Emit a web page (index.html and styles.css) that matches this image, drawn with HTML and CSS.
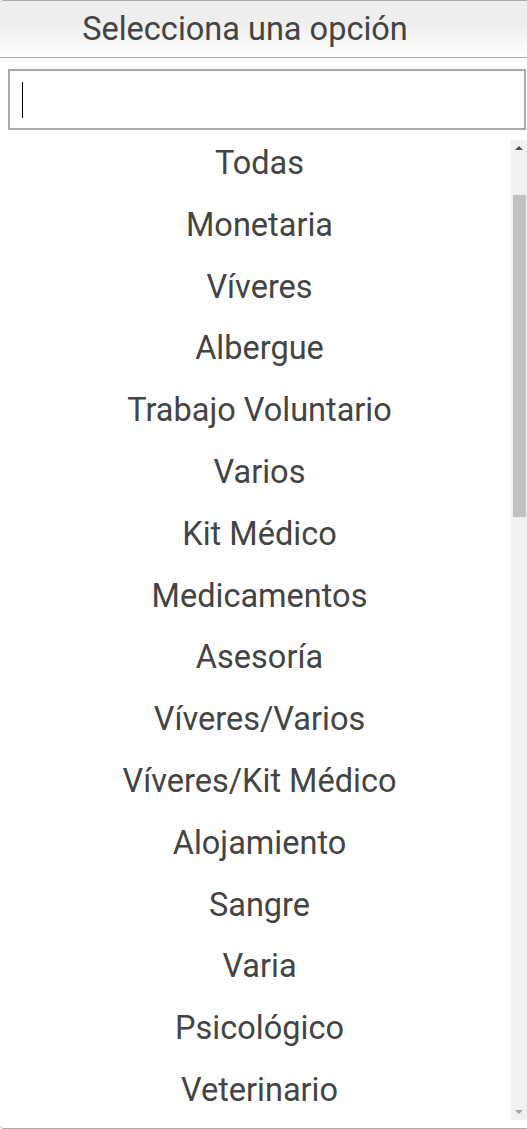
FILE: index.html
```html
<!DOCTYPE html>
<html lang="es">
<head>
  <meta charset="UTF-8">
  <title>Selecciona una opción</title>
  <link rel="stylesheet" href="styles.css">
</head>
<body>
  <div class="drop">
    <div class="choice">Selecciona una opción</div>
    <div class="search">
      <div class="field"><span class="caret"></span></div>
    </div>
    <div class="results">
      <div class="list">
        <ul class="options">
          <li>Todas</li>
          <li>Monetaria</li>
          <li>Víveres</li>
          <li>Albergue</li>
          <li>Trabajo Voluntario</li>
          <li>Varios</li>
          <li>Kit Médico</li>
          <li>Medicamentos</li>
          <li>Asesoría</li>
          <li>Víveres/Varios</li>
          <li>Víveres/Kit Médico</li>
          <li>Alojamiento</li>
          <li>Sangre</li>
          <li>Varia</li>
          <li>Psicológico</li>
          <li>Veterinario</li>
        </ul>
      </div>
      <div class="scrollbar">
        <div class="arrow up"></div>
        <div class="track">
          <div class="thumb"></div>
        </div>
        <div class="arrow down"></div>
      </div>
    </div>
  </div>
</body>
</html>
```

FILE: styles.css
```css
html, body {
  height: 100%;
  overflow: hidden;
}
body {
  margin: 0;
  font-family: Roboto, "Liberation Sans", sans-serif;
  color: #444;
  background: #fff;
}
.drop {
  height: 1129px;
  box-sizing: border-box;
  display: flex;
  flex-direction: column;
  border-top: 1px solid #aaa;
  border-bottom: 1px solid #aaa;
  border-radius: 4px 0 0 4px;
}
.choice {
  height: 56px;
  line-height: 56px;
  padding-right: 37px;
  text-align: center;
  font-size: 32.5px;
  border-bottom: 1px solid #aaa;
  background: linear-gradient(to top, #fff 0%, #eee 60%);
  border-radius: 4px 0 0 0;
}
.search {
  padding: 11px 1px 10px 8px;
}
.field {
  height: 61px;
  box-sizing: border-box;
  border: 2px solid #a9a9a9;
  padding: 0 12px;
  display: flex;
  align-items: center;
}
.caret {
  width: 1px;
  height: 36px;
  background: #000;
}
.results {
  flex: 1;
  display: flex;
  min-height: 0;
  padding-bottom: 8px;
}
.list {
  flex: 1;
  overflow: hidden;
  padding-left: 8px;
}
.options {
  list-style: none;
  margin: -7px 0 0;
  padding: 0;
}
.options li {
  height: 61.8px;
  line-height: 61.8px;
  text-align: center;
  font-size: 32.5px;
  white-space: nowrap;
}
.scrollbar {
  width: 16px;
  background: #f1f1f1;
  display: flex;
  flex-direction: column;
}
.arrow {
  height: 16px;
  display: flex;
  align-items: center;
  justify-content: center;
}
.arrow::before {
  content: "";
  border-left: 4px solid transparent;
  border-right: 4px solid transparent;
}
.arrow.up::before {
  border-bottom: 4px solid #505050;
}
.arrow.down::before {
  border-top: 4px solid #a3a3a3;
}
.track {
  flex: 1;
  padding-top: 39px;
}
.thumb {
  height: 322px;
  margin: 0 1px 0 2px;
  background: #c1c1c1;
}
```
